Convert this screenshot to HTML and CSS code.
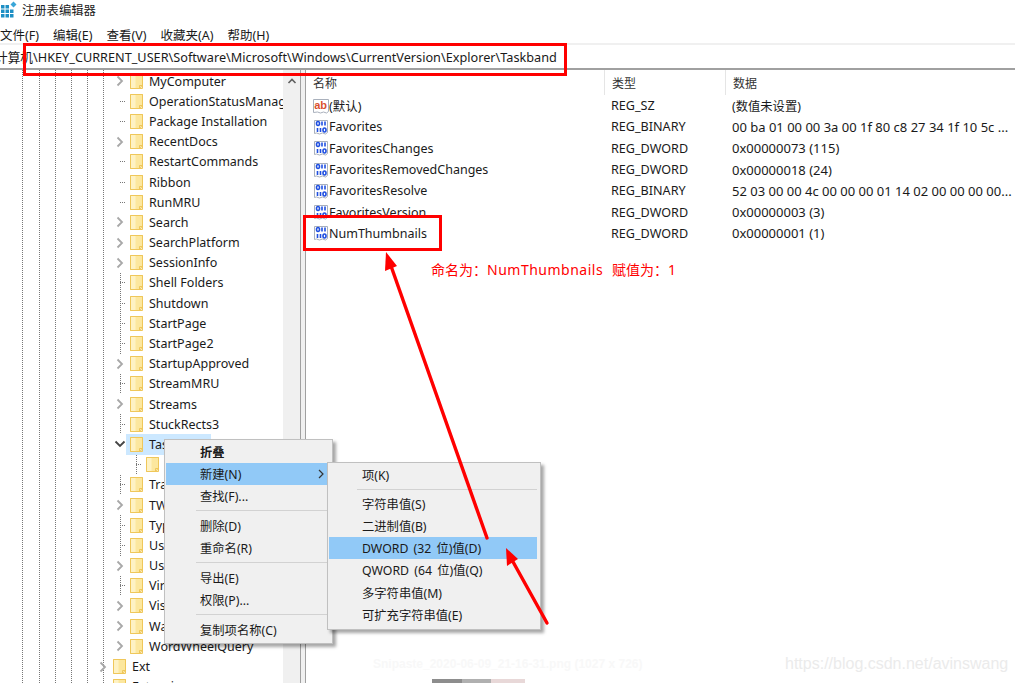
FILE: index.html
```html
<!DOCTYPE html>
<html lang="zh-CN">
<head>
    <meta charset="UTF-8">
    <title>注册表编辑器</title>
    <link rel="stylesheet" href="styles.css">
</head>
<body>
    <!-- shared icons -->
    <svg class="defs" width="0" height="0">
        <symbol id="folder" viewBox="0 0 13 15">
            <path d="M.5.5h12v11.5l-3 2.500h-9z" fill="#fce79e" stroke="#efc75a"/>
            <path d="M.5.5h5v14h-5z" fill="#fef2c4"/>
            <path d="M.5.500h12v14h-12z" fill="none" stroke="#efc75a"/>
            <path d="M9.500 14.500v-3h3" fill="none" stroke="#efc75a"/>
        </symbol>
        <symbol id="chev" viewBox="0 0 8 12">
            <path d="M1.500 1.500l4.500 4.500-4.500 4.500" fill="none" stroke="#a8a8a8" stroke-width="1.800"/>
        </symbol>
        <symbol id="bin" viewBox="0 0 16 16">
            <path d="M1.500 1.500h13v12l-2 1.500-3-1-3 1-3-1-2 .5z" fill="#fff" stroke="#a9b0bc"/>
            <g fill="none" stroke="#1f4fe0" stroke-width="1.600">
                <ellipse cx="5" cy="4.500" rx="1.500" ry="2"/>
                <path d="M9 2.500v4M12 2.500v4M4.500 9v4"/>
                <path d="M7.500 9v4"/>
                <ellipse cx="11.500" cy="11" rx="1.500" ry="2"/>
            </g>
        </symbol>
        <symbol id="str" viewBox="0 0 16 16">
            <path d="M.5 1.500h15v12l-2 1.500-3-1-3 1-3-1-4 .5z" fill="#fff" stroke="#a9b0bc"/>
            <text x="1.200" y="10.500" class="ab-text">ab</text>
        </symbol>
    </svg>

    <header class="titlebar">
        <svg class="app-icon" width="17" height="17" viewBox="0 0 17 17">
            <path d="M1 4h3.500v3.500h-3.500zM5.500 4h3.500v3.500h-3.500zM1 8.500h3.500v3.500h-3.500zM5.500 8.500h3.500v3.500h-3.500zM10 8.500h3.500v3.500h-3.500zM1 13h3.500v3.500h-3.500zM5.500 13h3.500v3.500h-3.500zM10 13h3.500v3.500h-3.500z" fill="#1e8fc4"/>
            <path d="M13.500 .5l3 3-3 3-3-3z" fill="#3aa6d8"/>
        </svg>
        <span>注册表编辑器</span>
    </header>

    <nav class="menubar">
        <span>文件(F)</span>
        <span>编辑(E)</span>
        <span>查看(V)</span>
        <span>收藏夹(A)</span>
        <span>帮助(H)</span>
    </nav>

    <div class="addressbar">
        <span>计算机\HKEY_CURRENT_USER\Software\Microsoft\Windows\CurrentVersion\Explorer\Taskband</span>
    </div>

    <main class="panes">
        <section class="tree-pane">
            <div class="tree">
                <div class="row"><span class="twisty"><svg><use href="#chev"/></svg></span><span class="node"><svg class="folder"><use href="#folder"/></svg><span class="label">MyComputer</span></span></div>
                <div class="row leaf"><span class="twisty"></span><span class="node"><svg class="folder"><use href="#folder"/></svg><span class="label">OperationStatusManager</span></span></div>
                <div class="row leaf"><span class="twisty"></span><span class="node"><svg class="folder"><use href="#folder"/></svg><span class="label">Package Installation</span></span></div>
                <div class="row"><span class="twisty"><svg><use href="#chev"/></svg></span><span class="node"><svg class="folder"><use href="#folder"/></svg><span class="label">RecentDocs</span></span></div>
                <div class="row leaf"><span class="twisty"></span><span class="node"><svg class="folder"><use href="#folder"/></svg><span class="label">RestartCommands</span></span></div>
                <div class="row leaf"><span class="twisty"></span><span class="node"><svg class="folder"><use href="#folder"/></svg><span class="label">Ribbon</span></span></div>
                <div class="row leaf"><span class="twisty"></span><span class="node"><svg class="folder"><use href="#folder"/></svg><span class="label">RunMRU</span></span></div>
                <div class="row"><span class="twisty"><svg><use href="#chev"/></svg></span><span class="node"><svg class="folder"><use href="#folder"/></svg><span class="label">Search</span></span></div>
                <div class="row"><span class="twisty"><svg><use href="#chev"/></svg></span><span class="node"><svg class="folder"><use href="#folder"/></svg><span class="label">SearchPlatform</span></span></div>
                <div class="row"><span class="twisty"><svg><use href="#chev"/></svg></span><span class="node"><svg class="folder"><use href="#folder"/></svg><span class="label">SessionInfo</span></span></div>
                <div class="lower">
                    <div class="row leaf"><span class="twisty"></span><span class="node"><svg class="folder"><use href="#folder"/></svg><span class="label">Shell Folders</span></span></div>
                    <div class="row leaf"><span class="twisty"></span><span class="node"><svg class="folder"><use href="#folder"/></svg><span class="label">Shutdown</span></span></div>
                    <div class="row leaf"><span class="twisty"></span><span class="node"><svg class="folder"><use href="#folder"/></svg><span class="label">StartPage</span></span></div>
                    <div class="row leaf"><span class="twisty"></span><span class="node"><svg class="folder"><use href="#folder"/></svg><span class="label">StartPage2</span></span></div>
                    <div class="row"><span class="twisty"><svg><use href="#chev"/></svg></span><span class="node"><svg class="folder"><use href="#folder"/></svg><span class="label">StartupApproved</span></span></div>
                    <div class="row leaf"><span class="twisty"></span><span class="node"><svg class="folder"><use href="#folder"/></svg><span class="label">StreamMRU</span></span></div>
                    <div class="row"><span class="twisty"><svg><use href="#chev"/></svg></span><span class="node"><svg class="folder"><use href="#folder"/></svg><span class="label">Streams</span></span></div>
                    <div class="row leaf"><span class="twisty"></span><span class="node"><svg class="folder"><use href="#folder"/></svg><span class="label">StuckRects3</span></span></div>
                    <div class="row"><span class="twisty open"><svg viewBox="0 0 12 8"><path d="M1.500 1.500l4.500 4.500 4.500-4.500" fill="none" stroke="#444" stroke-width="1.800"/></svg></span><span class="node selected"><svg class="folder"><use href="#folder"/></svg><span class="label">Taskband</span></span></div>
                    <div class="row leaf child"><span class="twisty"></span><span class="node"><svg class="folder"><use href="#folder"/></svg></span></div>
                    <div class="row leaf"><span class="twisty"></span><span class="node"><svg class="folder"><use href="#folder"/></svg><span class="label">TrayNotify</span></span></div>
                    <div class="row"><span class="twisty"><svg><use href="#chev"/></svg></span><span class="node"><svg class="folder"><use href="#folder"/></svg><span class="label">TWinUI</span></span></div>
                    <div class="row leaf"><span class="twisty"></span><span class="node"><svg class="folder"><use href="#folder"/></svg><span class="label">TypedPaths</span></span></div>
                    <div class="row leaf"><span class="twisty"></span><span class="node"><svg class="folder"><use href="#folder"/></svg><span class="label">User Shell Folders</span></span></div>
                    <div class="row"><span class="twisty"><svg><use href="#chev"/></svg></span><span class="node"><svg class="folder"><use href="#folder"/></svg><span class="label">UserAssist</span></span></div>
                    <div class="row leaf"><span class="twisty"></span><span class="node"><svg class="folder"><use href="#folder"/></svg><span class="label">VirtualDesktops</span></span></div>
                    <div class="row"><span class="twisty"><svg><use href="#chev"/></svg></span><span class="node"><svg class="folder"><use href="#folder"/></svg><span class="label">VisualEffects</span></span></div>
                    <div class="row"><span class="twisty"><svg><use href="#chev"/></svg></span><span class="node"><svg class="folder"><use href="#folder"/></svg><span class="label">Wallpapers</span></span></div>
                    <div class="row"><span class="twisty"><svg><use href="#chev"/></svg></span><span class="node"><svg class="folder"><use href="#folder"/></svg><span class="label">WordWheelQuery</span></span></div>
                </div>
                <div class="row up"><span class="twisty"><svg><use href="#chev"/></svg></span><span class="node"><svg class="folder"><use href="#folder"/></svg><span class="label">Ext</span></span></div>
                <div class="row up"><span class="twisty"></span><span class="node"><svg class="folder"><use href="#folder"/></svg><span class="label">Extensions</span></span></div>
            </div>
            <div class="scrollbar">
                <svg width="10" height="8" viewBox="0 0 10 8"><path d="M1.500 6l3.500-3.500 3.500 3.500" fill="none" stroke="#606060" stroke-width="1.600"/></svg>
            </div>
        </section>

        <div class="splitter"></div>

        <section class="list-pane">
            <div class="list-head">
                <span class="col-name">名称</span>
                <span class="col-type">类型</span>
                <span class="col-data">数据</span>
            </div>
            <div class="value"><span class="col-name"><svg class="val-icon"><use href="#str"/></svg>(默认)</span><span class="col-type">REG_SZ</span><span class="col-data cjk">(数值未设置)</span></div>
            <div class="value"><span class="col-name"><svg class="val-icon"><use href="#bin"/></svg>Favorites</span><span class="col-type">REG_BINARY</span><span class="col-data">00 ba 01 00 00 3a 00 1f 80 c8 27 34 1f 10 5c ...</span></div>
            <div class="value"><span class="col-name"><svg class="val-icon"><use href="#bin"/></svg>FavoritesChanges</span><span class="col-type">REG_DWORD</span><span class="col-data">0x00000073 (115)</span></div>
            <div class="value"><span class="col-name"><svg class="val-icon"><use href="#bin"/></svg>FavoritesRemovedChanges</span><span class="col-type">REG_DWORD</span><span class="col-data">0x00000018 (24)</span></div>
            <div class="value"><span class="col-name"><svg class="val-icon"><use href="#bin"/></svg>FavoritesResolve</span><span class="col-type">REG_BINARY</span><span class="col-data">52 03 00 00 4c 00 00 00 01 14 02 00 00 00 00...</span></div>
            <div class="value"><span class="col-name"><svg class="val-icon"><use href="#bin"/></svg>FavoritesVersion</span><span class="col-type">REG_DWORD</span><span class="col-data">0x00000003 (3)</span></div>
            <div class="value"><span class="col-name"><svg class="val-icon"><use href="#bin"/></svg>NumThumbnails</span><span class="col-type">REG_DWORD</span><span class="col-data">0x00000001 (1)</span></div>
        </section>
    </main>

    <!-- context menus -->
    <div class="menu menu-main">
        <div class="item bold">折叠</div>
        <div class="item hot">新建(N)<svg class="sub-arrow" width="6" height="10" viewBox="0 0 6 10"><path d="M1 1l4 4-4 4" fill="none" stroke="#333" stroke-width="1.200"/></svg></div>
        <div class="item">查找(F)...</div>
        <div class="sep"></div>
        <div class="item">删除(D)</div>
        <div class="item">重命名(R)</div>
        <div class="sep"></div>
        <div class="item">导出(E)</div>
        <div class="item">权限(P)...</div>
        <div class="sep"></div>
        <div class="item">复制项名称(C)</div>
    </div>
    <div class="menu menu-new">
        <div class="item">项(K)</div>
        <div class="sep"></div>
        <div class="item">字符串值(S)</div>
        <div class="item">二进制值(B)</div>
        <div class="item hot">DWORD (32 位)值(D)</div>
        <div class="item">QWORD (64 位)值(Q)</div>
        <div class="item">多字符串值(M)</div>
        <div class="item">可扩充字符串值(E)</div>
    </div>

    <!-- red markup on top of the screenshot -->
    <svg class="markup" width="1015" height="683" viewBox="0 0 1015 683">
        <g fill="none" stroke="#f00" stroke-width="3">
            <rect x="24.500" y="44.500" width="541" height="30"/>
            <rect x="304.500" y="216.500" width="136" height="33"/>
        </g>
        <g stroke="#f00" stroke-width="3.400" stroke-linecap="round">
            <path d="M487 538L391 266"/>
            <path d="M547 623L512 560"/>
        </g>
        <g fill="#f00">
            <path d="M386 252l11 14-12 5z"/>
            <path d="M506 548l12 11-11 7z"/>
        </g>
    </svg>
    <div class="note">命名为：<span class="note-name">NumThumbnails</span><span class="note-val">赋值为：1</span></div>

    <div class="snip-name">Snipaste_2020-06-09_21-16-31.png (1027 x 726)</div>
    <div class="snip-thumb"></div>
    <div class="watermark">https://blog.csdn.net/avinswang</div>
</body>
</html>
```

FILE: styles.css
```css
* {
    box-sizing: border-box;
}
html, body {
    margin: 0;
    height: 100%;
}
body {
    position: relative;
    width: 1015px;
    height: 683px;
    overflow: hidden;
    background: #fff;
    color: #1a1a1a;
    font-family: "Noto Sans", "Noto Sans CJK SC", sans-serif;
    font-size: 12.500px;
}
.defs {
    position: absolute;
}
.ab-text {
    font-family: "Liberation Sans", sans-serif;
    font-size: 11px;
    font-weight: bold;
    fill: #d9502e;
}

.titlebar {
    display: flex;
    align-items: center;
    gap: 5px;
    height: 19px;
    font-size: 12.300px;
}
.app-icon {
    flex: none;
}
.menubar {
    display: flex;
    align-items: center;
    gap: 14px;
    height: 24px;
    padding-top: 6px;
    font-size: 12.500px;
}
.addressbar {
    display: flex;
    align-items: center;
    height: 27px;
    overflow: hidden;
    white-space: nowrap;
    border-top: 2px solid #f0f0f0;
    border-bottom: 2px solid #a0a0a0;
}
.addressbar span {
    margin-left: -5px;
    font-size: 12.700px;
}

.panes {
    display: flex;
    height: 613px;
}
.tree-pane {
    display: flex;
    width: 300px;
    flex: none;
}
.tree {
    width: 283px;
    flex: none;
    overflow: hidden;
    background-image:
        linear-gradient(#777 50%, transparent 0),
        linear-gradient(#777 50%, transparent 0),
        linear-gradient(#777 50%, transparent 0),
        linear-gradient(#777 50%, transparent 0),
        linear-gradient(#777 50%, transparent 0),
        linear-gradient(#777 50%, transparent 0);
    background-size: 1px 2px;
    background-repeat: repeat-y;
    background-position: 22px 0, 39px 0, 55px 0, 71px 0, 87px 0, 103px 0;
    padding-top: 1px;
}
.row {
    display: flex;
    align-items: center;
    height: 20.200px;
    padding-left: 114px;
    white-space: nowrap;
}
.row.up {
    padding-left: 97px;
}
.row.child {
    padding-left: 130px;
}
.twisty {
    display: flex;
    align-items: center;
    justify-content: center;
    align-self: stretch;
    width: 12px;
    flex: none;
    background: #fff;
}
.twisty svg {
    width: 8px;
    height: 12px;
}
.twisty.open svg {
    width: 12px;
    height: 8px;
}
.row.up .twisty {
    background: none;
}
.leaf .twisty {
    background: repeating-linear-gradient(90deg, #777 0 1px, transparent 1px 2px) right center / 6px 1px no-repeat, #fff;
}
.lower .leaf .twisty {
    background:
        repeating-linear-gradient(90deg, #777 0 1px, transparent 1px 2px) right center / 6px 1px no-repeat,
        repeating-linear-gradient(#777 0 1px, transparent 1px 2px) 6px 0 / 1px 100% no-repeat,
        #fff;
}
.node {
    display: flex;
    align-items: center;
    gap: 6px;
    align-self: stretch;
    padding-left: 4px;
    background: #fff;
}
.node.selected {
    padding-right: 6px;
    background: #cce8ff;
}
.folder {
    width: 13px;
    height: 15px;
    flex: none;
}
.scrollbar {
    flex: 1;
    display: flex;
    justify-content: center;
    padding-top: 7px;
    background: #f0f0f0;
}
.splitter {
    width: 6px;
    flex: none;
    background: #f0f0f0;
    border-left: 1px solid #a0a0a0;
    border-right: 1px solid #a0a0a0;
}

.list-pane {
    flex: 1;
}
.list-head, .value {
    display: flex;
    align-items: center;
    white-space: nowrap;
}
.list-head {
    height: 25px;
    color: #333;
    font-size: 12px;
}
.value {
    height: 21.300px;
}
.col-name {
    display: flex;
    align-items: center;
    width: 298px;
    padding-left: 7px;
    flex: none;
}
.col-type {
    width: 121px;
    padding-left: 7px;
    font-size: 12.600px;
    flex: none;
}
.list-head .col-type, .list-head .col-data {
    align-self: stretch;
    display: flex;
    align-items: center;
    border-left: 1px solid #e5e5e5;
    padding-left: 7px;
    font-size: 12px;
}
.col-data {
    padding-left: 7px;
    font-size: 13px;
}
.col-data.cjk {
    font-size: 12.300px;
}
.val-icon {
    width: 16px;
    height: 16px;
    flex: none;
}

.menu {
    position: absolute;
    padding: 1px;
    background: #f0f0f0;
    border: 1px solid #c0c0c0;
    box-shadow: 3px 3px 3px rgba(0, 0, 0, 0.35);
    font-size: 12.300px;
    white-space: nowrap;
}
.menu-main {
    left: 164px;
    top: 439px;
    width: 169px;
    height: 205px;
}
.menu-new {
    left: 327px;
    top: 462px;
    width: 214px;
    height: 168px;
    padding-right: 3px;
}
.item {
    position: relative;
    display: flex;
    align-items: center;
    height: 22px;
    padding-left: 34px;
    word-spacing: 2px;
}
.menu-new .item {
    height: 22.100px;
    padding-left: 33px;
}
.item.bold {
    font-weight: bold;
}
.item.hot {
    background: #91c9f7;
}
.sub-arrow {
    position: absolute;
    right: 7px;
    top: 6px;
}
.sep {
    height: 8px;
    margin-left: 30px;
    padding-top: 3px;
}
.sep::before {
    content: "";
    display: block;
    height: 1px;
    background: #d2d2d2;
}
.menu-new .sep {
    margin-left: 28px;
    height: 7px;
}

.markup {
    position: absolute;
    left: 0;
    top: 0;
    pointer-events: none;
}
.note {
    position: absolute;
    left: 431px;
    top: 261px;
    color: #f00;
    font-size: 14px;
    white-space: nowrap;
    line-height: 18px;
}
.note-name {
    letter-spacing: 0.500px;
}
.note-val {
    margin-left: 9px;
}
.snip-name {
    position: absolute;
    left: 373px;
    top: 657px;
    color: #f8f8f8;
    font-family: "Liberation Sans", sans-serif;
    font-size: 12px;
    font-weight: bold;
}
.snip-thumb {
    position: absolute;
    left: 432px;
    top: 679px;
    width: 93px;
    height: 4px;
    background: linear-gradient(90deg, #8d8d8d 0 32%, #b0b0b0 32% 63%, #e8d8d8 63%);
}
.watermark {
    position: absolute;
    left: 785px;
    top: 655px;
    color: #ebebeb;
    font-family: "Liberation Sans", sans-serif;
    font-size: 16px;
}
```
